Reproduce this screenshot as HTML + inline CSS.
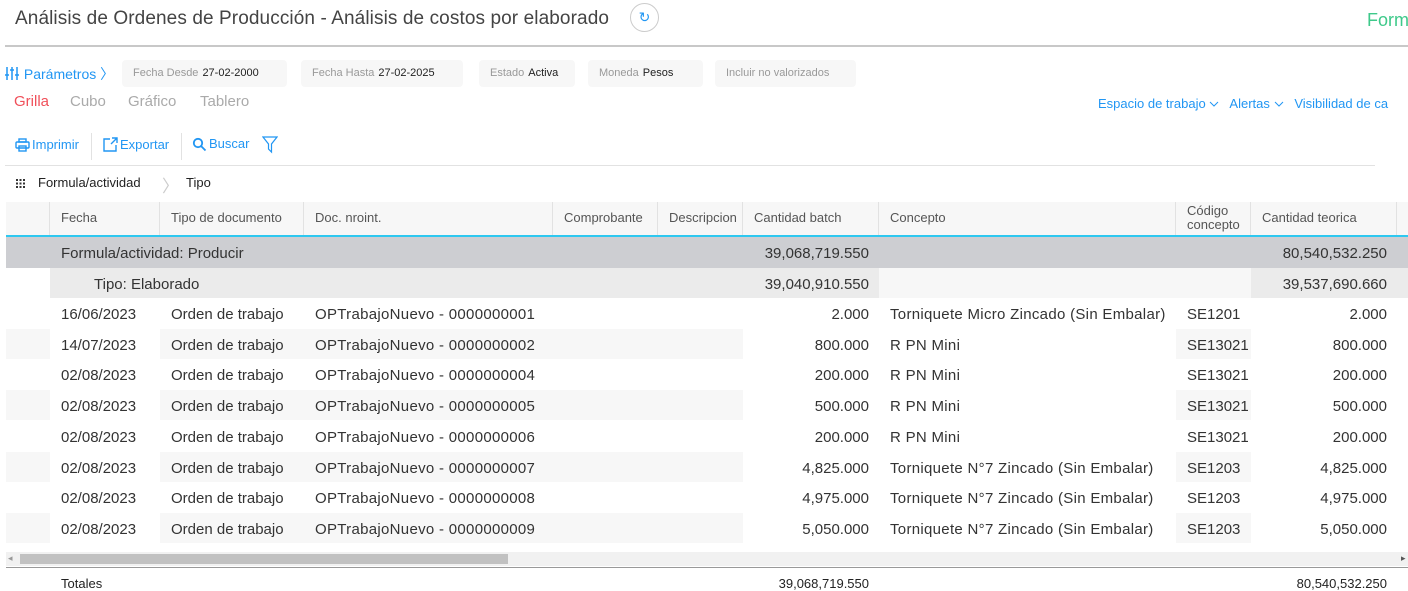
<!DOCTYPE html>
<html><head><meta charset="utf-8"><style>
*{box-sizing:border-box;margin:0;padding:0}
body{width:1408px;height:589px;overflow:hidden;background:#fff;font-family:"Liberation Sans",sans-serif;position:relative;color:#333}
.a{position:absolute;white-space:nowrap}
.blue{color:#2196f3}
.pill{position:absolute;top:60px;height:27px;background:#f7f7f7;border-radius:4px;font-size:11px;color:#999;line-height:27px;padding-left:11px}
.pill b{font-weight:normal;color:#222;margin-left:4px}
.cell{position:absolute;font-size:15px;line-height:30px;color:#333;white-space:nowrap;margin-top:2px}
.r{text-align:right}
.hd{position:absolute;top:202px;height:34px;font-size:13px;color:#555;line-height:32px;padding-left:11px;border-right:1px solid #e2e2e2;background:#f7f7f7}
</style></head><body>
<div class="a" style="left:15px;top:8px;font-size:19px;color:#444;letter-spacing:0.1px">Análisis de Ordenes de Producción - Análisis de costos por elaborado</div>
<div class="a" style="left:630px;top:3px;width:29px;height:29px;border:1px solid #ccc;border-radius:50%;text-align:center;line-height:27px;color:#2196f3;font-size:14px">↻</div>
<div class="a" style="left:1367px;top:10px;font-size:18px;color:#3ec98a">Form</div>
<div class="a" style="left:5px;top:45px;width:1403px;height:2px;background:#c8c8c8"></div>

<div class="a blue" style="left:5px;top:64px;font-size:14px"><svg width="15" height="15" viewBox="0 0 15 15" style="vertical-align:-2px"><g stroke="#2196f3" stroke-width="1.5"><line x1="2" y1="1" x2="2" y2="14"/><line x1="7" y1="1" x2="7" y2="14"/><line x1="12" y1="1" x2="12" y2="14"/><line x1="0" y1="9" x2="4" y2="9"/><line x1="5" y1="4" x2="9" y2="4"/><line x1="10" y1="9" x2="14" y2="9"/></g></svg> Parámetros 〉</div>
<div class="pill" style="left:122px;width:165px">Fecha Desde<b>27-02-2000</b></div>
<div class="pill" style="left:301px;width:162px">Fecha Hasta<b>27-02-2025</b></div>
<div class="pill" style="left:479px;width:96px">Estado<b>Activa</b></div>
<div class="pill" style="left:588px;width:115px">Moneda<b>Pesos</b></div>
<div class="pill" style="left:715px;width:141px">Incluir no valorizados</div>

<div class="a" style="left:14px;top:93px;font-size:15px;color:#f0505a">Grilla</div>
<div class="a" style="left:70px;top:93px;font-size:15px;color:#aaa">Cubo</div>
<div class="a" style="left:128px;top:93px;font-size:15px;color:#aaa">Gráfico</div>
<div class="a" style="left:200px;top:93px;font-size:15px;color:#aaa">Tablero</div>

<div class="a blue" style="left:1098px;top:96px;font-size:13px">Espacio de trabajo <svg width="10" height="7" viewBox="0 0 10 7"><path d="M1 1L5 5L9 1" fill="none" stroke="#2196f3"/></svg> &nbsp; Alertas <svg width="10" height="7" viewBox="0 0 10 7"><path d="M1 1L5 5L9 1" fill="none" stroke="#2196f3"/></svg> &nbsp; Visibilidad de ca</div>

<svg class="a" style="left:15px;top:138px" width="15" height="14" viewBox="0 0 15 14"><g fill="none" stroke="#2196f3" stroke-width="1.4"><rect x="4" y="1" width="7" height="3"/><rect x="1" y="4" width="13" height="6" rx="1"/><rect x="4" y="8" width="7" height="5"/></g></svg>
<div class="a blue" style="left:32px;top:137px;font-size:13px">Imprimir</div>
<div class="a" style="left:91px;top:133px;width:1px;height:27px;background:#e2e2e2"></div>
<svg class="a" style="left:103px;top:137px" width="15" height="15" viewBox="0 0 15 15"><g fill="none" stroke="#2196f3" stroke-width="1.4"><path d="M7 2H1V14H13V8"/><path d="M8 7L14 1M9 1H14V6"/></g></svg>
<div class="a blue" style="left:120px;top:137px;font-size:13px">Exportar</div>
<div class="a" style="left:181px;top:133px;width:1px;height:27px;background:#e2e2e2"></div>
<svg class="a" style="left:192px;top:137px" width="15" height="15" viewBox="0 0 15 15"><g fill="none" stroke="#2196f3" stroke-width="1.8"><circle cx="6" cy="6" r="4.2"/><path d="M9 9L13.5 13.5"/></g></svg>
<div class="a blue" style="left:209px;top:136px;font-size:13px">Buscar</div>
<svg class="a" style="left:262px;top:136px" width="16" height="18" viewBox="0 0 16 18"><path d="M1 1H15L9.5 8V16L6.5 13V8Z" fill="none" stroke="#2196f3" stroke-width="1.2"/></svg>
<div class="a" style="left:5px;top:165px;width:1370px;height:1px;background:#e2e2e2"></div>

<svg class="a" style="left:16px;top:179px" width="9" height="9" viewBox="0 0 9 9" fill="#333"><rect x="0" y="0" width="2" height="2"/><rect x="3.5" y="0" width="2" height="2"/><rect x="7" y="0" width="2" height="2"/><rect x="0" y="3.5" width="2" height="2"/><rect x="3.5" y="3.5" width="2" height="2"/><rect x="7" y="3.5" width="2" height="2"/><rect x="0" y="7" width="2" height="2"/><rect x="3.5" y="7" width="2" height="2"/><rect x="7" y="7" width="2" height="2"/></svg>
<div class="a" style="left:38px;top:175px;font-size:13px;color:#222">Formula/actividad</div>
<div class="a" style="left:162px;top:172px;font-size:17px;color:#ccc">〉</div>
<div class="a" style="left:186px;top:175px;font-size:13px;color:#222">Tipo</div>

<div class="hd" style="left:6px;width:44px"></div>
<div class="hd" style="left:50px;width:110px">Fecha</div>
<div class="hd" style="left:160px;width:144px">Tipo de documento</div>
<div class="hd" style="left:304px;width:249px">Doc. nroint.</div>
<div class="hd" style="left:553px;width:105px">Comprobante</div>
<div class="hd" style="left:658px;width:85px">Descripcion</div>
<div class="hd" style="left:743px;width:136px">Cantidad batch</div>
<div class="hd" style="left:879px;width:297px">Concepto</div>
<div class="hd" style="left:1176px;width:75px;line-height:14px;padding-top:2px">Código<br>concepto</div>
<div class="hd" style="left:1251px;width:146px">Cantidad teorica</div>
<div class="hd" style="left:1397px;width:11px"></div>
<div class="a" style="left:6px;top:235px;width:1402px;height:2px;background:#2ec8f0"></div>

<div class="a" style="left:6px;top:237px;width:1402px;height:31px;background:#cdced2"></div>
<div class="cell" style="left:61px;top:237px">Formula/actividad: Producir</div>
<div class="cell r" style="left:743px;top:237px;width:126px">39,068,719.550</div>
<div class="cell r" style="left:1251px;top:237px;width:136px">80,540,532.250</div>

<div class="a" style="left:50px;top:268px;width:829px;height:30px;background:#ebebeb"></div>
<div class="a" style="left:879px;top:268px;width:372px;height:30px;background:#f7f7f7"></div>
<div class="a" style="left:1251px;top:268px;width:157px;height:30px;background:#ebebeb"></div>
<div class="cell" style="left:94px;top:268px">Tipo: Elaborado</div>
<div class="cell r" style="left:743px;top:268px;width:126px">39,040,910.550</div>
<div class="cell r" style="left:1251px;top:268px;width:136px">39,537,690.660</div>

<div id="rows"></div>
<script>
var d=[["16/06/2023","0000000001","2.000","Torniquete Micro Zincado (Sin Embalar)","SE1201"],
["14/07/2023","0000000002","800.000","R PN Mini","SE13021"],
["02/08/2023","0000000004","200.000","R PN Mini","SE13021"],
["02/08/2023","0000000005","500.000","R PN Mini","SE13021"],
["02/08/2023","0000000006","200.000","R PN Mini","SE13021"],
["02/08/2023","0000000007","4,825.000","Torniquete N°7 Zincado (Sin Embalar)","SE1203"],
["02/08/2023","0000000008","4,975.000","Torniquete N°7 Zincado (Sin Embalar)","SE1203"],
["02/08/2023","0000000009","5,050.000","Torniquete N°7 Zincado (Sin Embalar)","SE1203"]];
var h="";
d.forEach(function(r,i){var y=298+Math.round(i*30.7);
if(i%2==1){h+='<div class="a" style="left:6px;top:'+y+'px;width:44px;height:30px;background:#f7f7f7"></div><div class="a" style="left:160px;top:'+y+'px;width:583px;height:30px;background:#f7f7f7"></div><div class="a" style="left:1176px;top:'+y+'px;width:75px;height:30px;background:#f7f7f7"></div>';}
h+='<div class="cell" style="left:61px;top:'+y+'px">'+r[0]+'</div><div class="cell" style="left:171px;top:'+y+'px">Orden de trabajo</div><div class="cell" style="left:315px;top:'+y+'px;letter-spacing:0.3px">OPTrabajoNuevo - '+r[1]+'</div><div class="cell r" style="left:743px;top:'+y+'px;width:126px">'+r[2]+'</div><div class="cell" style="left:890px;top:'+y+'px;letter-spacing:0.3px">'+r[3]+'</div><div class="cell" style="left:1187px;top:'+y+'px">'+r[4]+'</div><div class="cell r" style="left:1251px;top:'+y+'px;width:136px">'+r[2]+'</div>';});
document.getElementById("rows").innerHTML=h;
</script>
<div class="a" style="left:6px;top:552px;width:1402px;height:14px;background:#f1f1f1"></div>
<div class="a" style="left:20px;top:554px;width:488px;height:10px;background:#c1c1c1"></div>
<div class="a" style="left:8px;top:553px;font-size:9px;color:#999">◂</div>
<div class="a" style="left:1401px;top:553px;font-size:9px;color:#555">▸</div>
<div class="a" style="left:6px;top:567px;width:1402px;height:1px;background:#999"></div>
<div class="a" style="left:61px;top:576px;font-size:13px;color:#222">Totales</div>
<div class="a r" style="left:743px;top:576px;width:126px;font-size:13px;color:#222">39,068,719.550</div>
<div class="a r" style="left:1251px;top:576px;width:136px;font-size:13px;color:#222">80,540,532.250</div>
</body></html>
